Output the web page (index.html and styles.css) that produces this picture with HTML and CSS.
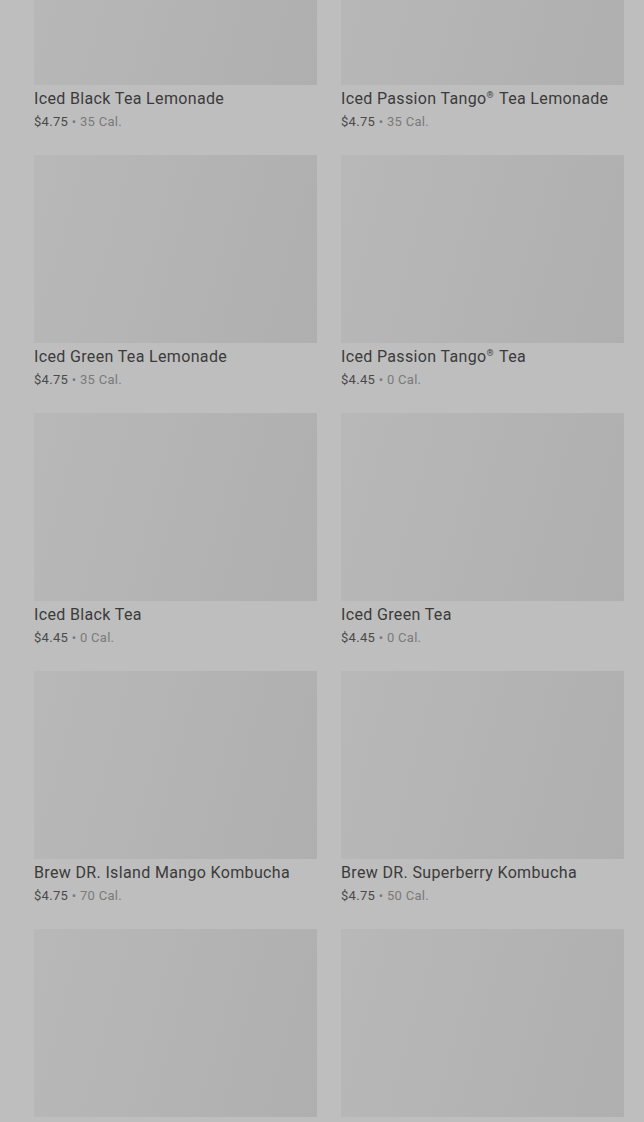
FILE: index.html
```html
<!DOCTYPE html>
<html>
<head>
  <title>Iced Teas</title>
  <link rel="stylesheet" href="styles.css">
</head>
<body>
  <div class="menu">
    <div class="grid">
      <div class="item">
        <div class="photo"></div>
        <div class="name">Iced Black Tea Lemonade</div>
        <div class="meta"><span class="price">$4.75</span> • 35 Cal.</div>
      </div>
      <div class="item">
        <div class="photo"></div>
        <div class="name">Iced Passion Tango<sup>®</sup> Tea Lemonade</div>
        <div class="meta"><span class="price">$4.75</span> • 35 Cal.</div>
      </div>
      <div class="item">
        <div class="photo"></div>
        <div class="name">Iced Green Tea Lemonade</div>
        <div class="meta"><span class="price">$4.75</span> • 35 Cal.</div>
      </div>
      <div class="item">
        <div class="photo"></div>
        <div class="name">Iced Passion Tango<sup>®</sup> Tea</div>
        <div class="meta"><span class="price">$4.45</span> • 0 Cal.</div>
      </div>
      <div class="item">
        <div class="photo"></div>
        <div class="name">Iced Black Tea</div>
        <div class="meta"><span class="price">$4.45</span> • 0 Cal.</div>
      </div>
      <div class="item">
        <div class="photo"></div>
        <div class="name">Iced Green Tea</div>
        <div class="meta"><span class="price">$4.45</span> • 0 Cal.</div>
      </div>
      <div class="item">
        <div class="photo"></div>
        <div class="name">Brew DR. Island Mango Kombucha</div>
        <div class="meta"><span class="price">$4.75</span> • 70 Cal.</div>
      </div>
      <div class="item">
        <div class="photo"></div>
        <div class="name">Brew DR. Superberry Kombucha</div>
        <div class="meta"><span class="price">$4.75</span> • 50 Cal.</div>
      </div>
      <div class="item">
        <div class="photo"></div>
        <div class="name">&nbsp;</div>
        <div class="meta">&nbsp;</div>
      </div>
      <div class="item">
        <div class="photo"></div>
        <div class="name">&nbsp;</div>
        <div class="meta">&nbsp;</div>
      </div>
    </div>
  </div>
</body>
</html>
```

FILE: styles.css
```css
html, body {
  height: 100%;
  }
body {
  margin: 0;
  overflow: hidden;
  background: #bebebe;
  font-family: Roboto, "Liberation Sans", Arial, sans-serif;
  color: #3a3a3a;
  }
.menu {
  padding: 0 20px 0 34px;
  margin-top: -103px;
  }
.grid {
  display: grid;
  grid-template-columns: 283px 283px;
  column-gap: 24px;
  row-gap: 23px;
  }
.photo {
  height: 188px;
  background: linear-gradient(105deg, #b8b8b8 0%, #b4b4b4 45%, #afafaf 100%);
  }
.name {
  margin-top: 1px;
  font-size: 16px;
  line-height: 25px;
  letter-spacing: 0.35px;
  color: #3b3b3b;
  white-space: nowrap;
  }
.name sup {
  font-size: 9px;
  line-height: 0;
  vertical-align: 6px;
  margin: 0 1px 0 0;
  }
.meta {
  padding-top: 1px;
  font-size: 13px;
  line-height: 20px;
  letter-spacing: 0.3px;
  color: #7a7a7a;
  }
.price {
  color: #4a4a4a;
  }
```
